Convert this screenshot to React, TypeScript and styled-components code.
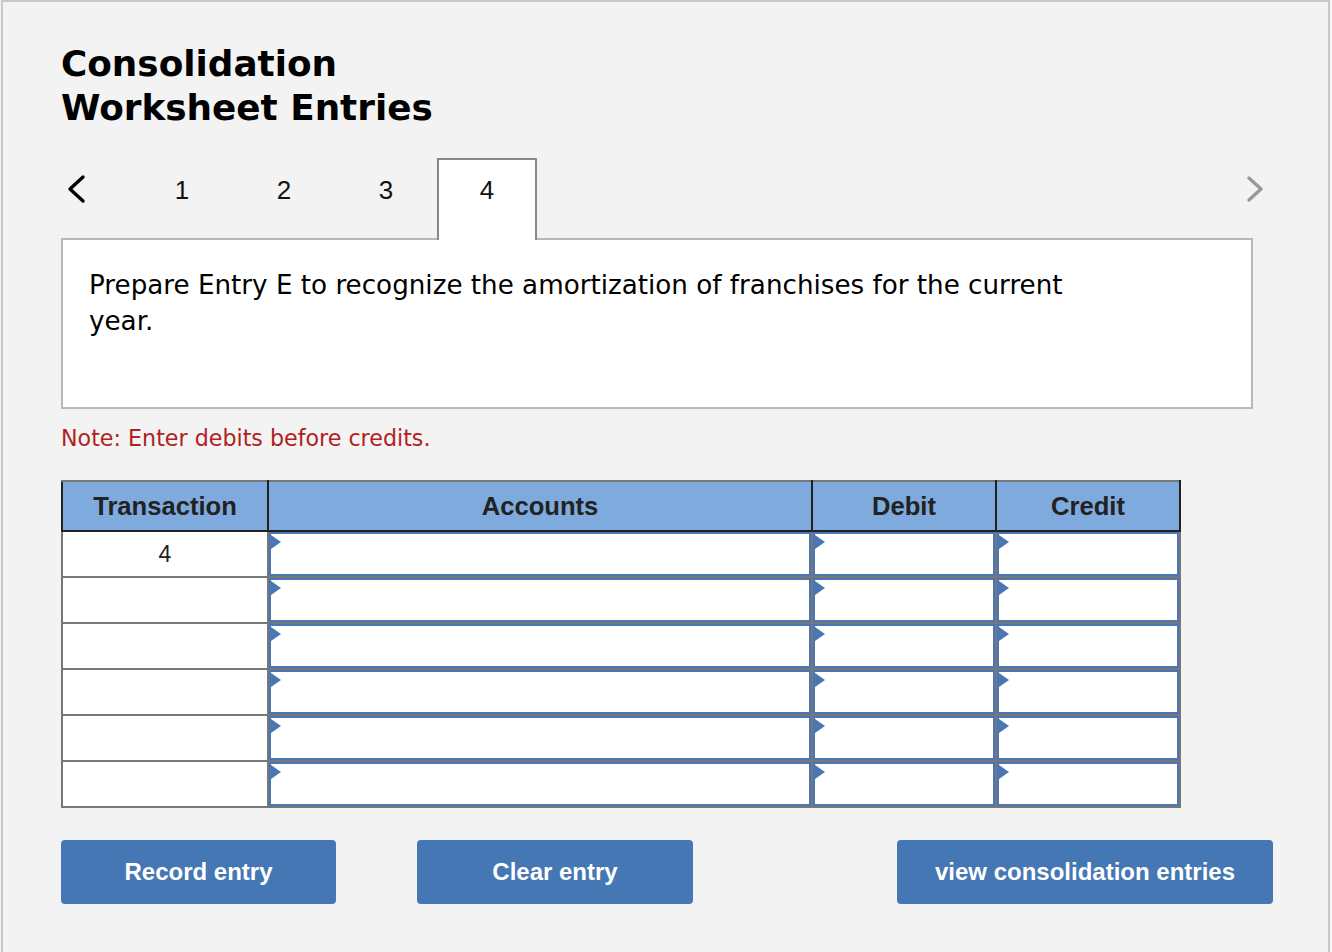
import styled, { createGlobalStyle } from "styled-components";

const GlobalStyle = createGlobalStyle`
  html, body {
    margin: 0;
    padding: 0;
    background: #f3f3f3;
  }
`;

const Frame = styled.div`
  box-sizing: border-box;
  width: 1329px;
  min-height: 952px;
  margin-left: 1px;
  border: 2px solid #c8c8c8;
  border-bottom: none;
  background: #f3f3f3;
  padding: 40px 0 0 58px;
`;

const Title = styled.h1`
  margin: 0;
  font-family: "DejaVu Sans", Verdana, sans-serif;
  font-weight: bold;
  font-size: 35.8px;
  line-height: 44px;
  color: #000;
`;

const TabRow = styled.div`
  display: flex;
  align-items: stretch;
  width: 1210px;
  height: 82px;
  margin-top: 28px;
  margin-bottom: -2px;
  position: relative;
  z-index: 1;
`;

const Arrow = styled.button<{ $muted?: boolean }>`
  background: none;
  border: none;
  padding: 16px 0 0;
  width: 70px;
  display: flex;
  align-items: flex-start;
  justify-content: ${(p) => (p.$muted ? "flex-end" : "flex-start")};
  color: ${(p) => (p.$muted ? "#999" : "#000")};
  svg {
    display: block;
  }
`;

const Tabs = styled.div`
  display: flex;
  flex: 1;
`;

const Tab = styled.div<{ $active?: boolean }>`
  box-sizing: border-box;
  width: ${(p) => (p.$active ? "100px" : "102px")};
  display: flex;
  justify-content: center;
  padding-top: ${(p) => (p.$active ? "15px" : "17px")};
  font-family: "Liberation Sans", Arial, sans-serif;
  font-size: 26px;
  color: #111;
  background: ${(p) => (p.$active ? "#fff" : "transparent")};
  border: ${(p) => (p.$active ? "2px solid #888" : "none")};
  border-bottom: none;
`;

const Prompt = styled.div`
  box-sizing: border-box;
  width: 1192px;
  height: 171px;
  background: #fff;
  border: 2px solid #b8b8b8;
  padding: 27px 26px;
`;

const PromptText = styled.p`
  margin: 0;
  max-width: 1020px;
  font-family: "DejaVu Sans", Verdana, sans-serif;
  font-size: 26.2px;
  line-height: 36px;
  color: #000;
`;

const Note = styled.p`
  margin: 15px 0 0;
  font-family: "DejaVu Sans", Verdana, sans-serif;
  font-size: 22.2px;
  line-height: 28px;
  color: #b0221e;
`;

const Table = styled.table`
  margin-top: 28px;
  border-collapse: collapse;
  table-layout: fixed;
  width: 1119px;
`;

const HeadCell = styled.th`
  height: 48px;
  padding: 0;
  background: #7eaade;
  border: 2px solid #222;
  border-top-color: #777;
  font-family: "Liberation Sans", Arial, sans-serif;
  font-weight: bold;
  font-size: 25.6px;
  color: #222;
  text-align: center;
`;

const Cell = styled.td`
  height: 44px;
  padding: 0;
  background: #fff;
  border: 2px solid #777;
  font-family: "Liberation Sans", Arial, sans-serif;
  font-size: 23px;
  color: #222;
  text-align: center;
  vertical-align: top;
`;

const CellText = styled.div`
  padding-top: 9px;
`;

const Input = styled.div`
  position: relative;
  box-sizing: border-box;
  height: 44px;
  background: #fff;
  border: 2px solid #4a76b5;
  &::before {
    content: "";
    position: absolute;
    left: 0;
    top: 1px;
    border-left: 10px solid #4a76b5;
    border-top: 7px solid transparent;
    border-bottom: 7px solid transparent;
  }
`;

const Buttons = styled.div`
  display: flex;
  margin-top: 32px;
  width: 1212px;
`;

const Button = styled.button<{ $width: number; $push?: boolean }>`
  width: ${(p) => p.$width}px;
  height: 64px;
  margin-left: ${(p) => (p.$push ? "auto" : "0")};
  margin-right: ${(p) => (p.$push ? "0" : "81px")};
  background: #4577b4;
  border: none;
  border-radius: 4px;
  font-family: "Liberation Sans", Arial, sans-serif;
  font-weight: bold;
  font-size: 24px;
  color: #fff;
  cursor: pointer;
`;

const rows = ["4", "", "", "", "", ""];

export default function App() {
  return (
    <>
      <GlobalStyle />
      <Frame>
        <Title>
          Consolidation
          <br />
          Worksheet Entries
        </Title>
        <TabRow>
          <Arrow>
            <svg width="30" height="30" viewBox="0 0 30 30">
              <polyline
                points="22,3 9,15 22,27"
                fill="none"
                stroke="currentColor"
                strokeWidth="3.4"
                strokeLinecap="round"
                strokeLinejoin="round"
              />
            </svg>
          </Arrow>
          <Tabs>
            <Tab>1</Tab>
            <Tab>2</Tab>
            <Tab>3</Tab>
            <Tab $active>4</Tab>
          </Tabs>
          <Arrow $muted>
            <svg width="30" height="30" viewBox="0 0 30 30">
              <polyline
                points="8,4 20,15 8,26"
                fill="none"
                stroke="currentColor"
                strokeWidth="3.4"
                strokeLinecap="round"
                strokeLinejoin="round"
              />
            </svg>
          </Arrow>
        </TabRow>
        <Prompt>
          <PromptText>
            Prepare Entry E to recognize the amortization of franchises for the
            current year.
          </PromptText>
        </Prompt>
        <Note>Note: Enter debits before credits.</Note>
        <Table>
          <colgroup>
            <col style={{ width: 206 }} />
            <col style={{ width: 544 }} />
            <col style={{ width: 184 }} />
            <col style={{ width: 184 }} />
          </colgroup>
          <thead>
            <tr>
              <HeadCell>Transaction</HeadCell>
              <HeadCell>Accounts</HeadCell>
              <HeadCell>Debit</HeadCell>
              <HeadCell>Credit</HeadCell>
            </tr>
          </thead>
          <tbody>
            {rows.map((t, i) => (
              <tr key={i}>
                <Cell>
                  <CellText>{t}</CellText>
                </Cell>
                <Cell>
                  <Input />
                </Cell>
                <Cell>
                  <Input />
                </Cell>
                <Cell>
                  <Input />
                </Cell>
              </tr>
            ))}
          </tbody>
        </Table>
        <Buttons>
          <Button $width={275}>Record entry</Button>
          <Button $width={276}>Clear entry</Button>
          <Button $width={376} $push>
            view consolidation entries
          </Button>
        </Buttons>
      </Frame>
    </>
  );
}
